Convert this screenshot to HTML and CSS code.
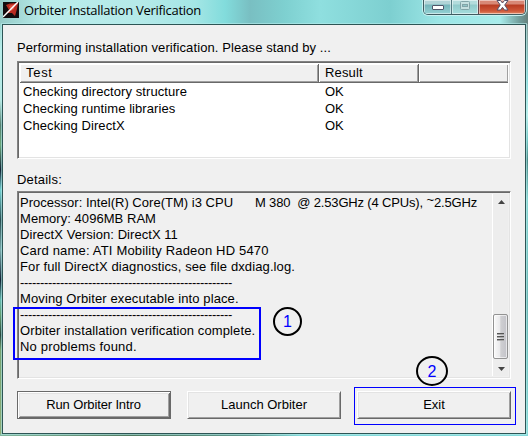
FILE: index.html
```html
<!DOCTYPE html>
<html lang="en">
<head>
<meta charset="utf-8">
<title>Orbiter Installation Verification</title>
<link rel="stylesheet" href="styles.css">
</head>
<body>
<div class="window">
  <header class="titlebar">
    <svg class="app-icon" width="16" height="16" viewBox="0 0 16 16">
      <rect width="16" height="16" fill="#120c0e"/>
      <path d="M3 3L7 1.500 15 1 14 7 12 14 9 11 3 11 6 8z" fill="#b92b20"/>
      <path d="M6 4L12 2 11 7 8 9z" fill="#df5140"/>
      <path d="M0 15L15 0" stroke="#fff" stroke-width="1.500"/>
    </svg>
    <h1 class="title"><span>Orbiter Installation Verification</span></h1>
    <div class="caption">
      <div class="cap cap-min"><svg width="12" height="6" viewBox="0 0 12 6"><rect x=".5" y=".5" width="11" height="4" rx=".5" fill="#fff" stroke="#50566a"/></svg></div>
      <div class="cap cap-max"><svg width="12" height="10" viewBox="0 0 12 10"><rect x="1.500" y=".5" width="9" height="8" rx="1" fill="#c5e0e0" stroke="#83a4a8"/><rect x="3.500" y="3.500" width="5" height="2" fill="#90c5c7" stroke="#83a4a8"/></svg></div>
      <div class="cap cap-close"><svg width="13" height="11" viewBox="0 0 13 11"><path d="M1 .5H4.500L6.500 3 8.500 .5H12L8.700 5 12 10H8.500L6.500 7.300 4.500 10H1L4.300 5z" fill="#fff" stroke="#54506a"/></svg></div>
    </div>
  </header>
  <main class="client">
    <p class="label intro"><span>Performing installation verification. Please stand by ...</span></p>
    <section class="sunken list">
      <div class="row head"><div>Test</div><div>Result</div><div></div></div>
      <div class="row"><div>Checking directory structure</div><div class="ok">OK</div></div>
      <div class="row"><div>Checking runtime libraries</div><div class="ok">OK</div></div>
      <div class="row"><div>Checking DirectX</div><div class="ok">OK</div></div>
    </section>
    <p class="label details-label">Details:</p>
    <section class="sunken details">
      <div class="log">
        <p class="cpu">Processor: Intel(R) Core(TM) i3 CPU <span class="model">M 380&nbsp; @ 2.53GHz (4 CPUs), <span class="tilde">~</span>2.5GHz</span></p>
        <p class="snug">Memory: 4096MB RAM</p>
        <p class="snug">DirectX Version: DirectX 11</p>
        <p class="wide">Card name: ATI Mobility Radeon HD 5470</p>
        <p>For full DirectX diagnostics, see file dxdiag.log.</p>
        <p class="dash">-----------------------------------------------------</p>
        <p>Moving Orbiter executable into place.</p>
        <p class="dash">-----------------------------------------------------</p>
        <p>Orbiter installation verification complete.</p>
        <p class="wide">No problems found.</p>
      </div>
      <div class="scroll">
        <svg class="arrow" width="7" height="4" viewBox="0 0 7 4"><path d="M0 4L3.500 0 7 4z" fill="#444"/></svg>
        <div class="thumb"><i></i><i></i><i></i></div>
        <svg class="arrow down" width="7" height="4" viewBox="0 0 7 4"><path d="M0 0H7L3.500 4z" fill="#444"/></svg>
      </div>
    </section>
    <footer class="buttons">
      <button class="btn default">Run Orbiter Intro</button>
      <button class="btn">Launch Orbiter</button>
      <button class="btn">Exit</button>
    </footer>
  </main>
  <div class="mark mark-result"></div>
  <div class="mark mark-exit"></div>
  <div class="num num-one">1</div>
  <div class="num num-two">2</div>
</div>
</body>
</html>
```
FILE: styles.css
```css
* { box-sizing: border-box; }
body { margin: 0; overflow: hidden; font: 13px/16px "Liberation Sans", Arial, sans-serif; color: #000; }
p, h1 { margin: 0; font-weight: normal; white-space: nowrap; }
.window {
  position: relative; width: 528px; height: 436px; display: flex; flex-direction: column;
  background:
    linear-gradient(90deg, #83b9a0, #4f7a60 130px, #5f9a90 250px, #83d9d9 300px) 0 434px / 100% 2px no-repeat,
    linear-gradient(#778899 0, #89a09c 30px, #8adada 80px, #b8f0ec 115px, #75c8c5 140px, #4b8c88 160px, #89d7d4 200px, #6db8b5 300px, #8adbd8 436px) 520px 0 / 8px 100% no-repeat,
    linear-gradient(#80bcb5 0, #b7eeea 50px, #b7e8e2 100px, #557f70 125px, #69a67a 145px, #123 170px, #71cfd0 190px, #284d51 220px, #78a9aa 250px, #123 280px, #62b8ad 300px, #609b6e 315px, #26463d 335px, #75a271 350px, #8cac77 436px);
}
.titlebar {
  height: 24px; display: flex; align-items: flex-start; padding-left: 3px; flex: none;
  background: linear-gradient(90deg, #95cbc7 0, #b9ecea 45px, #b5eae9 140px, #a4e6e5 195px, #82dcdc 225px, #79bfc2 250px, #7ed0d0 285px, #8fdfdf 320px, #7dcfd0 390px, #9ce6e6 440px, #a8eceb 500px, #709b99 520px, #67807c 528px);
}
.app-icon { margin-top: 2px; flex: none; }
.title { margin-left: 5px; font: 13px/20px "Open Sans", sans-serif; letter-spacing: -.28px; flex: 1; }
.caption {
  display: flex; width: 103px; height: 15px; margin-right: 2px; border: 1px solid #405c61; border-top: 0;
  border-radius: 0 0 5px 5px; overflow: hidden; box-shadow: 0 0 0 1px #c8f1f1;
}
.cap { display: flex; justify-content: center; height: 14px; box-shadow: inset 0 0 0 1px #ffffff80; }
.cap-min { width: 28px; border-right: 1px solid #537a80; background: linear-gradient(#b1d4d7 0 4px, #75b5ba 5px, #94d2d4); }
.cap-min svg { margin-top: 5px; }
.cap-max { width: 27px; border-right: 1px solid #66434a; background: linear-gradient(#b3dcdc 0 4px, #91caca 5px, #a5dedd); }
.cap-max svg { margin-top: 1px; }
.cap-close { width: 46px; background: linear-gradient(#d88876 0 4px, #b73b22 5px, #cf583a 11px, #e28c69); }
.client {
  flex: none; height: 410px; margin: 0 2px 0 2px; padding: 0 14px;
  background: #f0f0f0; border: 1px solid #2d5555; box-shadow: 0 0 0 1px #b8ecec99;
}
.label { height: 16px; }
.intro { margin-top: 15px; letter-spacing: .095px; }
.sunken { width: 494px; border: 1px solid #828282; border-right-color: #fff; border-bottom-color: #fff; box-shadow: inset 1px 1px #696969, inset -1px -1px #e3e3e3; }
.list { height: 98px; margin-top: 5px; padding: 2px; background: #fff; }
.row { display: grid; grid-template-columns: 301px 1fr; height: 17px; line-height: 17px; }
.row div:first-child { padding-left: 3px; letter-spacing: .08px; }
.row .ok { padding-left: 4px; }
.head { grid-template-columns: 299px 100px 1fr; height: 19px; line-height: 18px; background: #f0f0f0; border-bottom: 1px solid #696969; box-shadow: inset 0 -1px #a0a0a0; }
.head div { border: solid #696969; border-width: 0 1px 0 0; box-shadow: inset 1px 1px #fff, inset -1px -1px #a0a0a0; padding-left: 6px; letter-spacing: .15px; }
.head div:first-child { padding-left: 6px; letter-spacing: .7px; }
.head div:last-child { border-right: 0; }
.details-label { margin-top: 13px; letter-spacing: .2px; }
.details { height: 188px; margin-top: 3px; display: flex; justify-content: space-between; padding: 2px; }
.log p { height: 16px; letter-spacing: .11px; }
.log p.wide { letter-spacing: .18px; }
.log p.snug { letter-spacing: .05px; }
.log { padding-top: 1px; }
.log p.cpu { display: flex; width: 457px; letter-spacing: .02px; }
.model { margin-left: auto; letter-spacing: -.16px; }
.log p.dash { letter-spacing: -.33px; }
.tilde { position: relative; top: -3px; }
.scroll { width: 16px; border-left: 1px solid #fff; display: flex; flex-direction: column; align-items: center; background: #ededed; }
.arrow { margin: 6px 0 0 1px; flex: none; }
.down { margin: 8px 0 5px 1px; }
.thumb {
  width: 15px; height: 45px; margin-top: auto; display: flex; flex-direction: column; justify-content: center; align-items: center; gap: 1px;
  border: 1px solid #929292; border-radius: 2px; background: linear-gradient(90deg, #fafafa, #e9e9eb 45%, #cfcfd2 52%, #c3c3c9); box-shadow: inset 0 0 0 1px #fff9;
}
.thumb i { width: 7px; height: 2px; border-top: 1px solid #555; background: #aaa; }
.buttons { display: flex; gap: 16px; margin-top: 12px; }
.btn {
  width: 154px; height: 28px; padding: 0 0 1px; font: inherit; color: inherit; background: #f0f0f0;
  border: 1px solid #fff; border-right-color: #696969; border-bottom-color: #696969; border-radius: 0;
  box-shadow: inset 1px 1px #e3e3e3, inset -1px -1px #a0a0a0;
}
.btn.default { padding-right: 1px; letter-spacing: -.14px; border-color: #696969; box-shadow: inset 1px 1px #fff, inset -1px -1px #696969, inset 2px 2px #e3e3e3, inset -2px -2px #a0a0a0; }
.mark { position: absolute; border: 2px solid #0000ff; }
.mark-result { left: 13px; top: 307px; width: 248px; height: 53px; }
.mark-exit { left: 354px; top: 387px; width: 162px; height: 38px; border-width: 1px; }
.num { position: absolute; border: 2px solid #000; border-radius: 50%; color: #00f; font-size: 16px; text-align: center; }
.num-one { left: 273px; top: 307px; width: 29px; height: 29px; line-height: 26px; }
.num-two { left: 416px; top: 356px; width: 32px; height: 30px; line-height: 27px; }
```
